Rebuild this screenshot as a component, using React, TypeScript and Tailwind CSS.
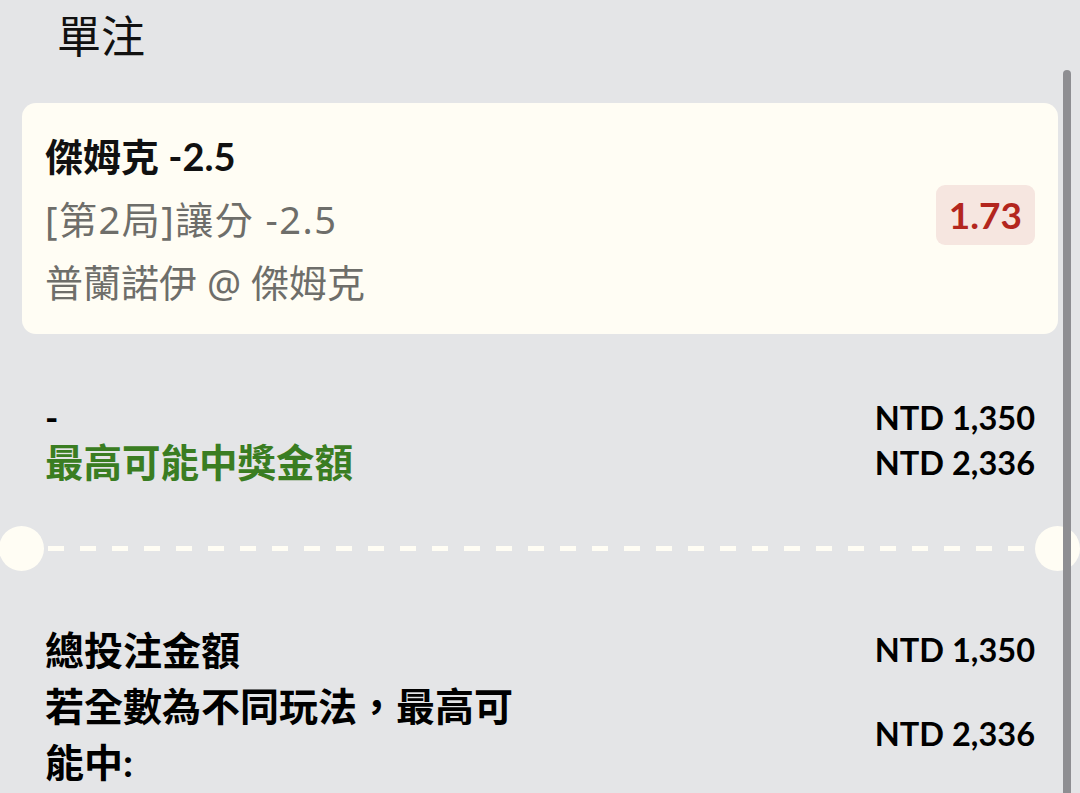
export default function App() {
  return (
    <div className="relative w-[1080px] h-[793px] overflow-hidden bg-[#e4e5e7] text-black font-['Lato','Noto_Sans_CJK_TC',sans-serif]">
      <div className="pl-[57px] pt-[8px] text-[44px] leading-[52px] font-['Noto_Sans_CJK_TC',sans-serif] text-[#111]">單注</div>

      <div className="mx-[22px] mt-[43px] rounded-[14px] bg-[#fffdf4] pl-[23px] pr-[23px] pt-[22px] pb-[20px] flex items-center justify-between">
        <div className="flex flex-col">
          <div className="text-[38px] leading-[63px] font-bold text-[#111]">傑姆克 -2.5</div>
          <div className="text-[38px] leading-[63px] tracking-[1.5px] text-[#6e6e6a] font-['Noto_Sans','Noto_Sans_CJK_TC',sans-serif]">[第2局]讓分 -2.5</div>
          <div className="text-[38px] leading-[63px] text-[#6e6e6a] font-['Noto_Sans','Noto_Sans_CJK_TC',sans-serif]">普蘭諾伊 @ 傑姆克</div>
        </div>
        <div className="mb-[9px] rounded-[9px] bg-[#f6e6e0] px-[13px] h-[60px] flex items-center text-[37px] font-bold text-[#b3261e]">1.73</div>
      </div>

      <div className="mt-[61px] px-[45px] flex justify-between">
        <div className="flex flex-col">
          <div className="text-[36px] leading-[45px] font-bold">-</div>
          <div className="text-[38.5px] leading-[45px] font-bold text-[#3a7d22]">最高可能中獎金額</div>
        </div>
        <div className="flex flex-col items-end text-[32.5px] leading-[45px] font-bold">
          <div>NTD 1,350</div>
          <div>NTD 2,336</div>
        </div>
      </div>

      <div className="mt-[41px] h-[45px] flex items-center">
        <div className="-ml-px w-[45px] h-[45px] shrink-0 rounded-full bg-[#fffdf4]" />
        <div className="flex-1 ml-[4px] mr-[2px] h-[5px] bg-[repeating-linear-gradient(90deg,#fffdf4_0_16px,transparent_16px_32px)]" />
        <div className="w-[45px] h-[45px] shrink-0 rounded-full bg-[#fffdf4]" />
      </div>

      <div className="mt-[51px] px-[45px] flex flex-col">
        <div className="flex justify-between items-center">
          <div className="w-[480px] text-[39px] leading-[56px] font-bold">總投注金額</div>
          <div className="text-[32.5px] font-bold">NTD 1,350</div>
        </div>
        <div className="flex justify-between items-center">
          <div className="w-[480px] text-[39px] leading-[56px] font-bold">若全數為不同玩法，最高可能中:</div>
          <div className="text-[32.5px] font-bold">NTD 2,336</div>
        </div>
      </div>

      <div className="absolute right-[9px] top-[70px] bottom-0 w-[8px] rounded-t-full bg-[#8e8e92] z-10" />
    </div>
  );
}
